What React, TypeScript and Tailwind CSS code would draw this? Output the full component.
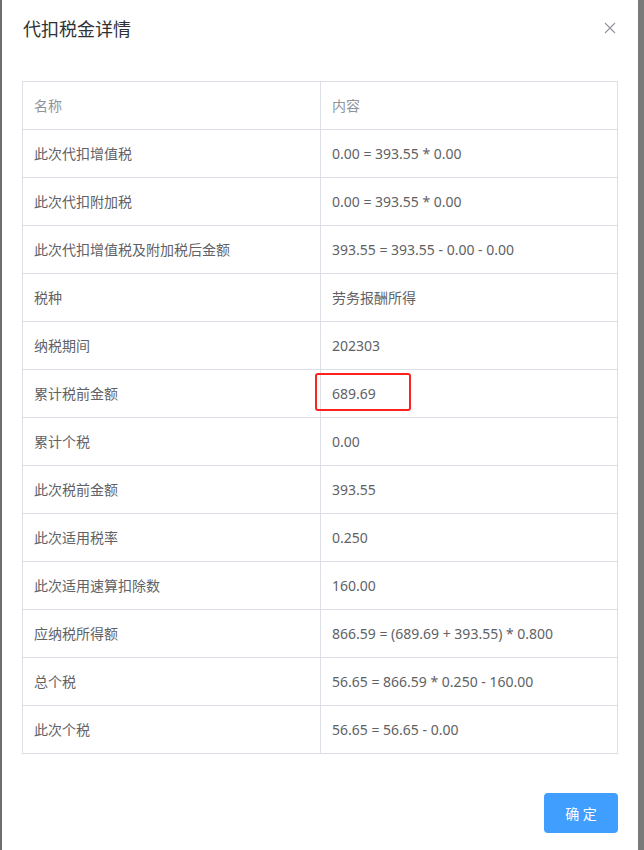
import React from "react";

const rows: [string, string][] = [
  ["此次代扣增值税", "0.00 = 393.55 * 0.00"],
  ["此次代扣附加税", "0.00 = 393.55 * 0.00"],
  ["此次代扣增值税及附加税后金额", "393.55 = 393.55 - 0.00 - 0.00"],
  ["税种", "劳务报酬所得"],
  ["纳税期间", "202303"],
  ["累计税前金额", "689.69"],
  ["累计个税", "0.00"],
  ["此次税前金额", "393.55"],
  ["此次适用税率", "0.250"],
  ["此次适用速算扣除数", "160.00"],
  ["应纳税所得额", "866.59 = (689.69 + 393.55) * 0.800"],
  ["总个税", "56.65 = 866.59 * 0.250 - 160.00"],
  ["此次个税", "56.65 = 56.65 - 0.00"],
];

export default function App() {
  return (
    <div
      className="flex h-[850px] w-[644px] overflow-hidden"
      style={{ fontFamily: '"Noto Sans", "Noto Sans CJK SC", sans-serif' }}
    >
      <div className="w-[2px] bg-[#6e6e6e]" />
      <div className="flex flex-1 flex-col bg-white">
        {/* header */}
        <div className="flex items-center justify-between pl-[21px] pr-[22px] pt-[17px]">
          <span className="text-[18px] leading-6 text-[#303133]">代扣税金详情</span>
          <svg width="12" height="12" viewBox="0 0 12 12" className="mt-[-2px]">
            <path d="M1 1L11 11M11 1L1 11" stroke="#909399" strokeWidth="1.1" />
          </svg>
        </div>

        {/* table */}
        <div className="mt-[40px] ml-[20px] mr-[20px] border border-[#dcdfe6]">
          <div className="flex h-[47px] items-center text-[14px] text-[#909399]">
            <div className="flex h-full w-[298px] items-center border-r border-[#dcdfe6] pl-[11px]">名称</div>
            <div className="flex h-full flex-1 items-center pl-[11px]">内容</div>
          </div>
          {rows.map(([k, v]) => (
            <div key={k} className="flex h-[48px] items-center border-t border-[#dcdfe6] text-[14px] text-[#606266]">
              <div className="flex h-full w-[298px] items-center border-r border-[#dcdfe6] pl-[11px]">{k}</div>
              <div className="relative flex h-full flex-1 items-center pl-[11px]">
                {v}
                {k === "累计税前金额" && (
                  <div className="absolute left-[-6px] top-[3px] h-[38px] w-[96px] rounded-[3px] border-2 border-[#ff2020]" />
                )}
              </div>
            </div>
          ))}
        </div>

        {/* footer */}
        <div className="mt-auto flex justify-end pb-[17px] pr-[20px]">
          <button className="h-[40px] w-[74px] rounded-[4px] bg-[#409eff] text-[14px] text-white">确 定</button>
        </div>
      </div>
      <div className="w-[6px] bg-[#7a7a7a]" />
    </div>
  );
}
